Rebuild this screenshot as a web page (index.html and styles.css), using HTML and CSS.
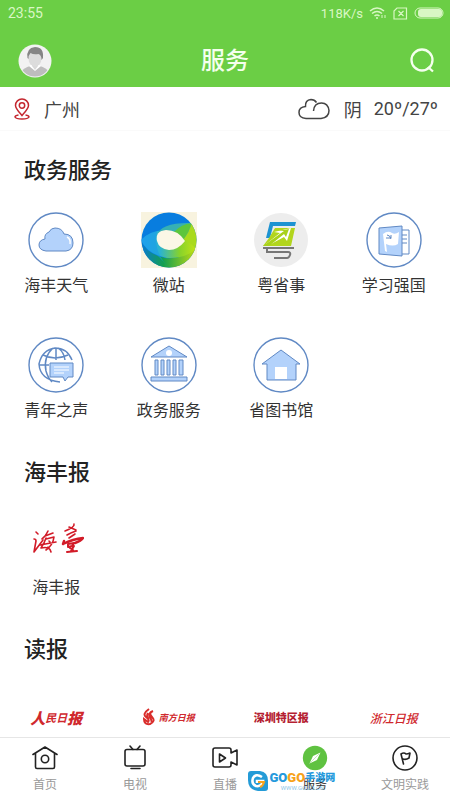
FILE: index.html
```html
<!DOCTYPE html>
<html lang="zh-CN">
<head>
  <meta charset="UTF-8" />
  <meta name="viewport" content="width=device-width, initial-scale=1.0"/>
  <title>服务</title>
  <link rel="stylesheet" href="styles.css">
</head>
<body>

  <header class="top">
    <!-- Status bar -->
    <div class="status">
      <span class="time">23:55</span>
      <span class="speed">118K/s</span>
      <svg width="18" height="14" viewBox="0 0 18 14" fill="none" stroke="#d9f7c4" stroke-width="1.6">
        <path d="M1 5Q8 -1 15 5M3 7.500Q8 3.500 13 7.500M5.500 10Q8 8 10.500 10"/>
        <circle cx="8" cy="12" r="1" fill="#d9f7c4" stroke="none"/>
        <path d="M13 9v3M16 9v3" stroke-width="1"/>
      </svg>
      <svg width="15" height="13" viewBox="0 0 15 13" fill="none" stroke="#d9f7c4" stroke-width="1.2">
        <path d="M4 1h9.500v11H1V4zM5.500 4l5 5M10.500 4l-5 5"/>
      </svg>
      <svg width="30" height="12" viewBox="0 0 30 12">
        <rect x="1" y="1" width="28" height="10" rx="5" fill="none" stroke="#d9f7c4"/>
        <rect x="4" y="2" width="24" height="8" rx="3" fill="#d9f7c4"/>
      </svg>
    </div>

    <div class="title-bar">
      <button class="icon-btn" aria-label="我的">
        <svg width="34" height="34" viewBox="0 0 34 34">
          <clipPath id="face"><circle cx="17" cy="17" r="15.500"/></clipPath>
          <circle cx="17" cy="17" r="16.500" fill="#f2f2f2"/>
          <g clip-path="url(#face)">
            <path d="M4 34V27q2-3 8-5h10q6 2 8 5v7z" fill="#bdbdbd"/>
            <path d="M11 22l6 5 6-5-3-2h-6z" fill="#fff"/>
            <path d="M14 18h6v4l-3 4-3-4z" fill="#d9d9d9"/>
            <ellipse cx="17" cy="14.500" rx="6.500" ry="8" fill="#dcdcdc"/>
            <path d="M9.500 14Q8 4 17 3q9 0 8 11l-1.500 2q0-5-3-6-5 1-8-1-2 2-2 6z" fill="#858585"/>
          </g>
        </svg>
      </button>
      <h1>服务</h1>
      <button class="icon-btn" aria-label="搜索">
        <svg width="26" height="26" viewBox="0 0 26 26" fill="none" stroke="#f4ffed" stroke-width="2.300">
          <circle cx="12" cy="12" r="10.500"/><path d="M18 19l5 4.500"/>
        </svg>
      </button>
    </div>
  </header>

  <div class="weather">
    <svg width="16" height="22" viewBox="0 0 16 22" fill="none" stroke="#c4272f" stroke-width="1.500">
      <path d="M8 17.500C4 13 1.500 10.500 1.500 7.500a6.500 6.500 0 0 1 13 0C14.500 10.500 12 13 8 17.500z"/>
      <circle cx="8" cy="7.500" r="2.700"/>
      <path d="M4.500 17Q1 17.500 1 19q1 2 7 2t7-2q0-1.500-3.500-2"/>
    </svg>
    <span class="city">广州</span>
    <svg width="32" height="22" viewBox="0 0 32 22" fill="none" stroke="#444" stroke-width="1.500">
      <path d="M8 20.500Q1 20 1 14.500 1 9 7.500 8.500 7 2 13 1.500q3.500 0 5.500 3"/>
      <path d="M8 20.500H23q8-1 8-8Q30 5 23.500 5 16 5 15.500 13"/>
    </svg>
    <span class="sky">阴</span>
    <span class="temp">20º/27º</span>
  </div>

  <main>
    <section>
      <h2>政务服务</h2>
      <div class="grid">
        <a class="item" href="#">
          <svg viewBox="0 0 56 56" fill="none" stroke="#6089c4">
            <circle cx="28" cy="28" r="27" stroke-width="1.400"/>
            <path d="M18 39Q11 38 11 33q0-5 6-6-1-5 4-7 2-4 6-4 7 0 9 6 9 0 9 9 0 7-7 8z" fill="#b3d2fb"/>
            <path d="M39 25q4 2 3 7" stroke="#fff" stroke-width="1.500"/>
          </svg>
          海丰天气
        </a>
        <a class="item" href="#">
          <svg viewBox="0 0 56 56">
            <defs>
              <linearGradient id="low" x1="0" x2="1">
                <stop offset="0" stop-color="#0878d6"/><stop offset="0.400" stop-color="#14a04e"/><stop offset="1" stop-color="#c8dd10"/>
              </linearGradient>
              <linearGradient id="band" x1="0" x2="1">
                <stop offset="0" stop-color="#25a8f0"/><stop offset="0.350" stop-color="#2bb3d0"/><stop offset="0.700" stop-color="#86d22c"/><stop offset="1" stop-color="#c2e315"/>
              </linearGradient>
              <clipPath id="disc"><circle cx="28" cy="28" r="27.500"/></clipPath>
            </defs>
            <path d="M0 0h56v56H0z" fill="#f8f3df"/>
            <g clip-path="url(#disc)">
              <path d="M0 0h56v56H0z" fill="#087ddf"/>
              <path d="M0 28Q5 42 24 46 42 48 56 34V56H0z" fill="url(#low)"/>
              <path d="M0 28Q8 19 24 18 44 18 55 37 44 47 26 46 6 42 0 28z" fill="url(#band)"/>
              <path d="M15 24Q20 10 51 11 48 20 43 27 36 18 25 18 18 19 15 24z" fill="#36b0b4"/>
              <path d="M33 20Q40 12 51 11 48 20 43 27 39 22 33 20z" fill="#5cc63c"/>
              <path d="M51 11Q60 24 55 37 51 32 43 27 48 20 51 11z" fill="#a9da1c"/>
              <path d="M15 24Q14 42 28 56 22 49 16 43 4 38 0 28 8 20 16 19z" fill="#1697ea" opacity="0.500"/>
            </g>
            <path d="M16 29Q14 19 25 18q12 0 19 11-7 9-16 9-10-1-12-9z" fill="#fbf7e6"/>
          </svg>
          微站
        </a>
        <a class="item" href="#">
          <svg viewBox="0 0 56 56">
            <circle cx="28" cy="28" r="27" fill="#ededed"/>
            <path d="M17 10h26l-1 4H20l-3 12h-4z" fill="#1d93d2"/>
            <path d="M22 16h20l-4 18H10l6-8z" fill="#b2d51d"/>
            <path d="M13 32L27 21l-6-1 17-4-4 13-3-4-13 7z" fill="#fff"/>
            <path d="M10 34L31 19l-6 0 11-2-3 8-2-3-15 12z" fill="#a9d11a"/>
            <path d="M10 36h31M14 37v3h21q3 0 2 3t-3 3H21" fill="none" stroke="#777" stroke-width="2"/>
          </svg>
          粤省事
        </a>
        <a class="item" href="#">
          <svg viewBox="0 0 56 56" fill="none" stroke="#6089c4">
            <circle cx="28" cy="28" r="27" stroke-width="1.400"/>
            <path d="M34 18h9v24H34zM36 23h5M36 27h5M36 31h5"/>
            <path d="M13 16l23-2v30l-23-2z" fill="#b3d2fb"/>
            <path d="M17 22q5-4 9-1 3 2 7-1l-1 12q-5 3-12 0l1 8-2-1z" fill="#fff" stroke="none"/>
            <path d="M20 26h5v-3M21 23q3 0 4 4"/>
          </svg>
          学习强国
        </a>
        <a class="item" href="#">
          <svg viewBox="0 0 56 56" fill="none" stroke="#6089c4">
            <circle cx="28" cy="28" r="27" stroke-width="1.400"/>
            <g stroke-width="1.500">
              <path d="M44 23Q39 11 27 11 14 13 11 27q1 16 21 18M11 28h10M28 11v12M15 18q12 6 25 0M25 11q-10 9-7 23 2 7 6 11M30 11q6 4 7 12"/>
            </g>
            <path d="M22 26h23v14h-5l-3 4-2-4H22z" fill="#b3d2fb"/>
            <path d="M26 30h15M26 33h15M26 36h10" stroke="#fff"/>
          </svg>
          青年之声
        </a>
        <a class="item" href="#">
          <svg viewBox="0 0 56 56" fill="#b3d2fb" stroke="#6089c4">
            <circle cx="28" cy="28" r="27" fill="none" stroke-width="1.400"/>
            <path d="M10 20L28 9l18 11z"/>
            <circle cx="28" cy="16" r="3" fill="#fff" stroke="none"/>
            <path d="M14 23h3v15h-3zM20 23h3v15h-3zM26 23h3v15h-3zM32 23h3v15h-3zM38 23h4v15h-4zM10 40h36v4H10z"/>
          </svg>
          政务服务
        </a>
        <a class="item" href="#">
          <svg viewBox="0 0 56 56" fill="#b3d2fb" stroke="#6089c4">
            <circle cx="28" cy="28" r="27" fill="none" stroke-width="1.400"/>
            <path d="M14 43V27H9l19-14 19 14h-4v16z"/>
            <path d="M22 30h12v12H22z" fill="#fff" stroke="none"/>
          </svg>
          省图书馆
        </a>
      </div>
    </section>

    <section>
      <h2>海丰报</h2>
      <div class="grid">
        <a class="item" href="#">
          <svg viewBox="0 0 56 56" fill="none" stroke="#d21b28" stroke-width="1.600" stroke-linecap="round" stroke-linejoin="round">
            <path d="M8 18l2 2M6 25q2 0 2 2l-2 11 9-12"/>
            <path d="M20 17q-2 5-6 8M17 22l8-3M18 24q-2 6-5 10 9-2 10 4M18 25l8-2q-1 8-8 13M12 31l16-3M21 27l1 1M20 33l1 1"/>
            <path d="M46 10q1 3-9 7M41 13l7 3M48 17q-6 2-9 4M47 20l-6 4"/>
            <path d="M35 30q10-5 20-6-2 3-8 5M36 27l-1 3" stroke-width="2.400"/>
            <path d="M40 30l6-1-2 3-4 1zM42 34l3 2M46 32l-3 5M39 38l10-1" stroke-width="2"/>
          </svg>
          海丰报
        </a>
      </div>
    </section>

    <section>
      <h2>读报</h2>
      <div class="grid">
        <a class="paper people" href="#"><b>人</b>民日<b>报</b></a>
        <a class="paper nanfang" href="#">
          <svg width="12" height="18" viewBox="0 0 12 18" fill="none" stroke="#d92d2b" stroke-width="2">
            <path d="M6 1Q-1 6 3 9t2 5L1 11q0 6 6 5 6-3 2-7T10 3Q5 5 7 9t1 5M5 5q-2 3 1 6"/>
          </svg>
          南方日报
        </a>
        <a class="paper shenzhen" href="#">深圳特区报</a>
        <a class="paper zhejiang" href="#">浙江日报</a>
      </div>
    </section>
  </main>

  <!-- Bottom tabs -->
  <nav class="tabs">
    <a href="#">
      <svg width="26" height="26" viewBox="0 0 26 26">
        <path d="M1 9.500L13 2l12 7.500M3.500 8.500V22q0 1.500 1.500 1.500h16q1.500 0 1.500-1.500V8.500"/><circle cx="13" cy="14" r="3.700"/>
      </svg>
      首页
    </a>
    <a href="#">
      <svg width="26" height="26" viewBox="0 0 26 26">
        <rect x="3" y="4.500" width="20" height="16.500" rx="2"/><path d="M8 1l3 3.500M18 1l-3 3.500M9 23.500h9"/>
      </svg>
      电视
    </a>
    <a href="#">
      <svg width="26" height="26" viewBox="0 0 26 26">
        <path d="M19 8V5q0-2-2-2H3Q1 3 1 5v15q0 2 2 2h14q2 0 2-2v-3l6 3V5zM7.500 9v8l6-4z"/>
      </svg>
      直播
    </a>
    <a class="active" href="#">
      <svg width="26" height="26" viewBox="0 0 26 26">
        <circle cx="13" cy="13" r="12.200" fill="#5fc241" stroke="none"/>
        <path d="M18.500 7.500L15 15l-7.500 3.500L11 11z" fill="#fff" stroke="none"/>
        <path d="M8 18l9-9" stroke="#b8e5a8" stroke-width="0.800"/>
      </svg>
      服务
    </a>
    <a href="#">
      <svg width="26" height="26" viewBox="0 0 26 26">
        <circle cx="13" cy="13" r="12"/><path d="M11.500 19L9 9q3-2 5 0 2 0 4-1l-1 5q-3 2-6 1"/>
      </svg>
      文明实践
    </a>
    <div class="mark">
      <svg width="20" height="20" viewBox="0 0 20 20">
        <path d="M0 3q0-3 3-3h9q8 1 8 10v7q0 3-3 3h-7Q0 19 0 9z" fill="#249bd7"/>
        <path d="M14 6Q8 2 5 7q-2 6 3 8 6 1 7-5H9v2" fill="none" stroke="#fff" stroke-width="2.500"/>
        <path d="M10 11h6q-1 4-4 5" fill="none" stroke="#f6a31d" stroke-width="2"/>
      </svg>
      <div class="mark-text">
        <div class="mark-name"><span class="go">GO</span><span class="go2">GO</span><span class="cn">手游网</span></div>
        <div class="mark-url">WWW.GOGO.CN</div>
      </div>
    </div>
  </nav>

</body>
</html>
```
FILE: styles.css
```css
* { margin: 0; padding: 0; box-sizing: border-box; }

html, body { height: 100%; }

body {
  display: flex;
  flex-direction: column;
  overflow: hidden;
  background: #fff;
  color: #333;
  font-family: Roboto, "Noto Sans CJK SC", sans-serif;
}

a { color: inherit; text-decoration: none; }
svg { flex: none; }

.top {
  flex: none;
  background: #6bce45;
}

.status {
  display: flex;
  align-items: center;
  gap: 6px;
  height: 26px;
  padding: 0 6px 0 8px;
  color: #d9f7c4;
  font-size: 13px;
}

.time {
  margin-right: auto;
  font-size: 14px;
}

.title-bar {
  display: flex;
  align-items: center;
  justify-content: space-between;
  height: 61px;
  padding: 9px 10px 0 18px;
}

.title-bar h1 {
  color: #f4ffed;
  font-size: 24px;
  font-weight: 500;
  line-height: 36px;
}

.icon-btn {
  display: flex;
  width: 34px;
  height: 34px;
  align-items: center;
  justify-content: center;
  border: none;
  background: none;
}

.icon-btn:first-child { margin-right: -8px; }

.weather {
  flex: none;
  display: flex;
  align-items: center;
  height: 44px;
  padding: 0 12px 0 14px;
  border-bottom: 1px solid #fafafa;
  font-size: 18px;
  color: #444;
}

.city {
  margin-left: 14px;
  margin-right: auto;
}

.sky { margin: 0 12px 0 14px; }

main {
  flex: 1;
  min-height: 0;
  overflow-y: auto;
  scrollbar-width: none;
  padding-top: 24px;
}

section { margin-bottom: 34px; }

h2 {
  margin-bottom: 25px;
  padding-left: 24px;
  color: #222;
  font-size: 22px;
  font-weight: 500;
  line-height: 32px;
}

.grid {
  display: grid;
  grid-template-columns: repeat(4, 1fr);
  row-gap: 39px;
}

.item {
  display: flex;
  flex-direction: column;
  align-items: center;
  gap: 6px;
  font-size: 16px;
  line-height: 24px;
  white-space: nowrap;
}

.item > svg {
  width: 56px;
  height: 56px;
}

.paper {
  display: flex;
  align-items: center;
  justify-content: center;
  height: 52px;
  color: #d0282d;
  font-style: italic;
  font-weight: 700;
}

.people { font-size: 11px; }
.people b { font-size: 15px; }
.nanfang { gap: 4px; font-size: 9px; }
.shenzhen { color: #b51f33; font-size: 11px; font-style: normal; font-weight: 900; }
.zhejiang { font-size: 12px; font-weight: 500; }

.tabs {
  position: relative;
  flex: none;
  display: grid;
  grid-template-columns: repeat(5, 1fr);
  height: 63px;
  padding-top: 7px;
  border-top: 1px solid #e6e6e6;
  background: #fff;
}

.tabs a {
  display: flex;
  flex-direction: column;
  align-items: center;
  gap: 6px;
  color: #999;
  font-size: 12px;
  line-height: 16px;
}

.tabs a > svg {
  fill: none;
  stroke: #222;
  stroke-width: 1.6;
  stroke-linecap: round;
  stroke-linejoin: round;
}

.tabs .active { color: #333; }

/* site mark laid over the tabs */
.mark {
  position: absolute;
  left: 55%;
  bottom: 9px;
  display: flex;
  align-items: center;
  gap: 2px;
  pointer-events: none;
}

.mark-name {
  display: flex;
  align-items: center;
  font-size: 13px;
  font-weight: 900;
  line-height: 15px;
}

.mark-url {
  color: #8cc5e8;
  font-size: 6px;
  line-height: 6px;
  text-align: center;
}

.go { color: #2599dc; }
.go2 { color: #f7a21b; }
.cn { color: #2599dc; font-size: 10px; }
```
